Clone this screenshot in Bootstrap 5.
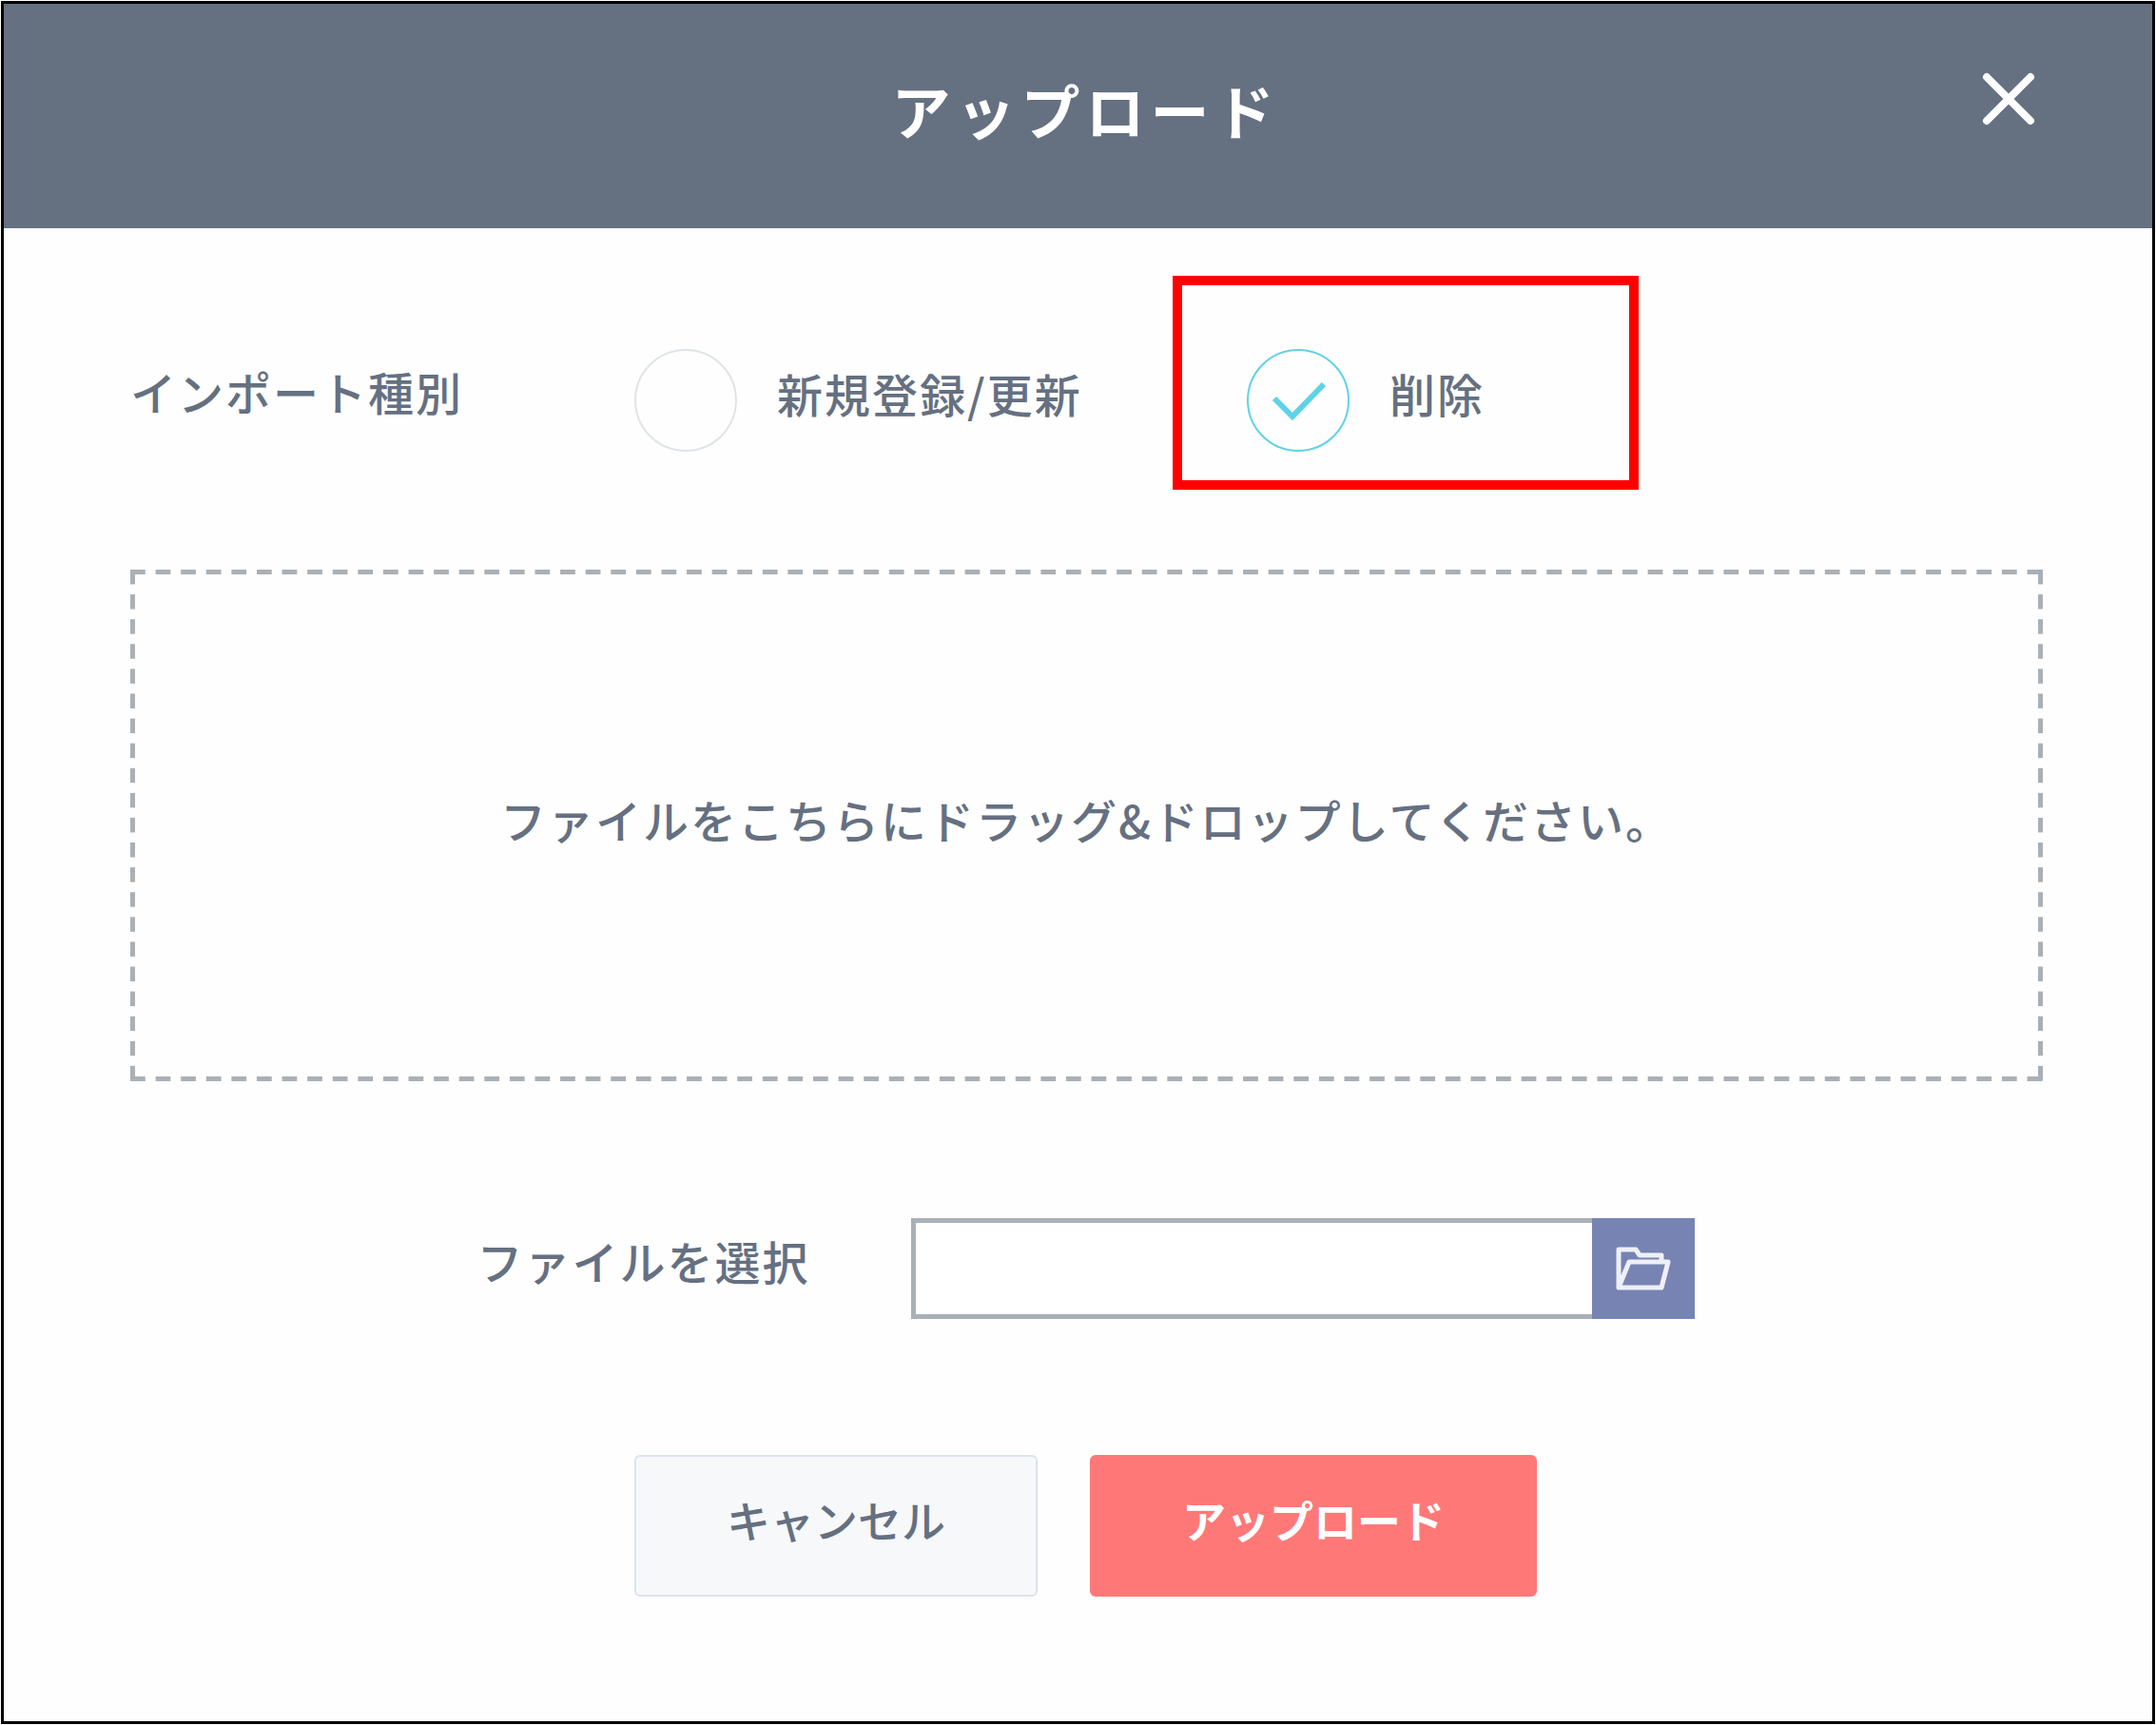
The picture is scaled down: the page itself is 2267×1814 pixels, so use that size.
<!DOCTYPE html>
<html lang="ja">
<head>
<meta charset="utf-8">
<meta name="viewport" content="width=device-width, initial-scale=1">
<title>アップロード</title>
<link href="https://cdn.jsdelivr.net/npm/bootstrap@5.3.0/dist/css/bootstrap.min.css" rel="stylesheet">
<style>
:root { --ink: #657081; --line: #a9b0b6; --aqua: #5fd3e6; }
body { background: #fefefe; color: var(--ink); font-family: "Noto Sans CJK JP", sans-serif; font-size: 48px; line-height: 72px; font-weight: 500; padding: 1px; }
.dialog-frame { min-height: calc(100vh - 2px); border: 3px solid #000; }
.dialog-head { background: var(--ink); color: #fff; height: 236px; padding: 0 117px 14px 133px; }
.dialog-title { font-size: 62px; line-height: 92px; font-weight: 700; letter-spacing: 6px; }
.close-btn { top: 64px; right: 115px; width: 72px; height: 72px; }
.dialog-main { padding: 127px 115px 60px 133px; }
.tracked { letter-spacing: 2px; }
.type-legend { width: 530px; line-height: 88px; }
.choice-text { padding: 10px 0 26px 42px; line-height: 72px; }
.choice-first { width: 644px; }
.choice .form-check-input { width: 108px; height: 108px; margin: 0; border: 2px solid #dfe4e8; background-color: transparent; box-shadow: none; }
.choice .form-check-input:checked { border-color: var(--aqua); background-size: 108px 108px; background-position: center; background-image: url("data:image/svg+xml,%3csvg xmlns='http://www.w3.org/2000/svg' viewBox='0 0 108 108'%3e%3cpath fill='none' stroke='%235fd3e6' stroke-width='6' d='M29 52L48 71L81 37'/%3e%3c/svg%3e"); }
.mark-box { top: -77px; bottom: -40px; left: -78px; width: 490px; border: 10px solid #f00; pointer-events: none; }
.drop-area {
  height: 538px; margin-top: 124px; padding: 2px 0 0 16px; border: 0 solid transparent; border-width: 0 16px 16px 0;
  background-image: linear-gradient(90deg, var(--line) 60%, transparent 60%), linear-gradient(90deg, var(--line) 60%, transparent 60%), linear-gradient(var(--line) 60%, transparent 60%), linear-gradient(var(--line) 60%, transparent 60%);
  background-size: calc(100% / 75) 5px, calc(100% / 75) 5px, 5px calc(100% / 20), 5px calc(100% / 20);
  background-position: 0 0, 0 calc(100% + 16px), 0 0, calc(100% + 16px) 0;
  background-repeat: repeat-x, repeat-x, repeat-y, repeat-y;
}
.file-row { margin-top: 144px; padding-right: 2px; }
.file-label { padding: 8px 106px 26px 0; }
.file-group { width: 824px; height: 106px; }
.file-group .form-control { border: 5px solid var(--line); border-right: 0; border-radius: 0; background: #fff; color: var(--ink); font-size: 48px; }
.browse-btn { width: 108px; background: #7784b3; border: 0; border-radius: 0; }
.action-row { margin-top: 143px; padding-right: 2px; gap: 55px; }
.action-btn { height: 149px; font-size: 46px; line-height: 72px; border: 2px solid; border-radius: 6px; padding: 0 95px 16px; }
.cancel-btn { font-weight: 500; color: var(--ink); background: #f6f8fa; border-color: #dde3ee; }
.send-btn { font-weight: 700; color: #fff; background: #ff7878; border-color: #ff7878; }
</style>
</head>
<body>
<div class="dialog-frame" role="dialog" aria-labelledby="dialogTitle">
  <header class="dialog-head position-relative d-flex align-items-center justify-content-center">
    <h1 class="dialog-title m-0" id="dialogTitle">アップロード</h1>
    <button type="button" class="close-btn btn p-0 border-0 position-absolute d-flex align-items-center justify-content-center" aria-label="閉じる">
      <svg width="56" height="58" viewBox="0 0 56 58" fill="none" stroke="#fff" stroke-width="8" stroke-linecap="round"><path d="M5 6L51 52M51 6L5 52"/></svg>
    </button>
  </header>

  <form class="dialog-main">
    <div class="d-flex align-items-start" role="radiogroup" aria-labelledby="typeLabel">
      <div class="type-legend tracked flex-shrink-0" id="typeLabel">インポート種別</div>
      <div class="choice choice-first d-flex align-items-center">
        <input class="form-check-input flex-shrink-0" type="radio" name="importType" id="typeUpsert">
        <label class="choice-text tracked" for="typeUpsert">新規登録/更新</label>
      </div>
      <div class="choice position-relative d-flex align-items-center">
        <input class="form-check-input flex-shrink-0" type="radio" name="importType" id="typeDelete" checked>
        <label class="choice-text tracked" for="typeDelete">削除</label>
        <div class="mark-box position-absolute"></div>
      </div>
    </div>

    <div class="drop-area tracked d-flex align-items-center justify-content-center">ファイルをこちらにドラッグ&amp;ドロップしてください。</div>

    <div class="file-row d-flex justify-content-center align-items-center">
      <label class="file-label tracked" for="fileName">ファイルを選択</label>
      <div class="file-group input-group flex-nowrap">
        <input type="text" class="form-control" id="fileName">
        <button type="button" class="browse-btn btn p-0 d-flex align-items-center justify-content-center" aria-label="参照">
          <svg width="58" height="46" viewBox="0 0 58 46" fill="none" stroke="#eef0f8" stroke-width="5" stroke-linejoin="round"><path d="M3 43V3H21L25 9H48V16M3 43L14 16H55L48 43Z"/></svg>
        </button>
      </div>
    </div>

    <div class="action-row d-flex justify-content-center">
      <button type="button" class="action-btn cancel-btn btn">キャンセル</button>
      <button type="submit" class="action-btn send-btn btn">アップロード</button>
    </div>
  </form>
</div>
<script src="https://cdn.jsdelivr.net/npm/bootstrap@5.3.0/dist/js/bootstrap.bundle.min.js"></script>
</body>
</html>
